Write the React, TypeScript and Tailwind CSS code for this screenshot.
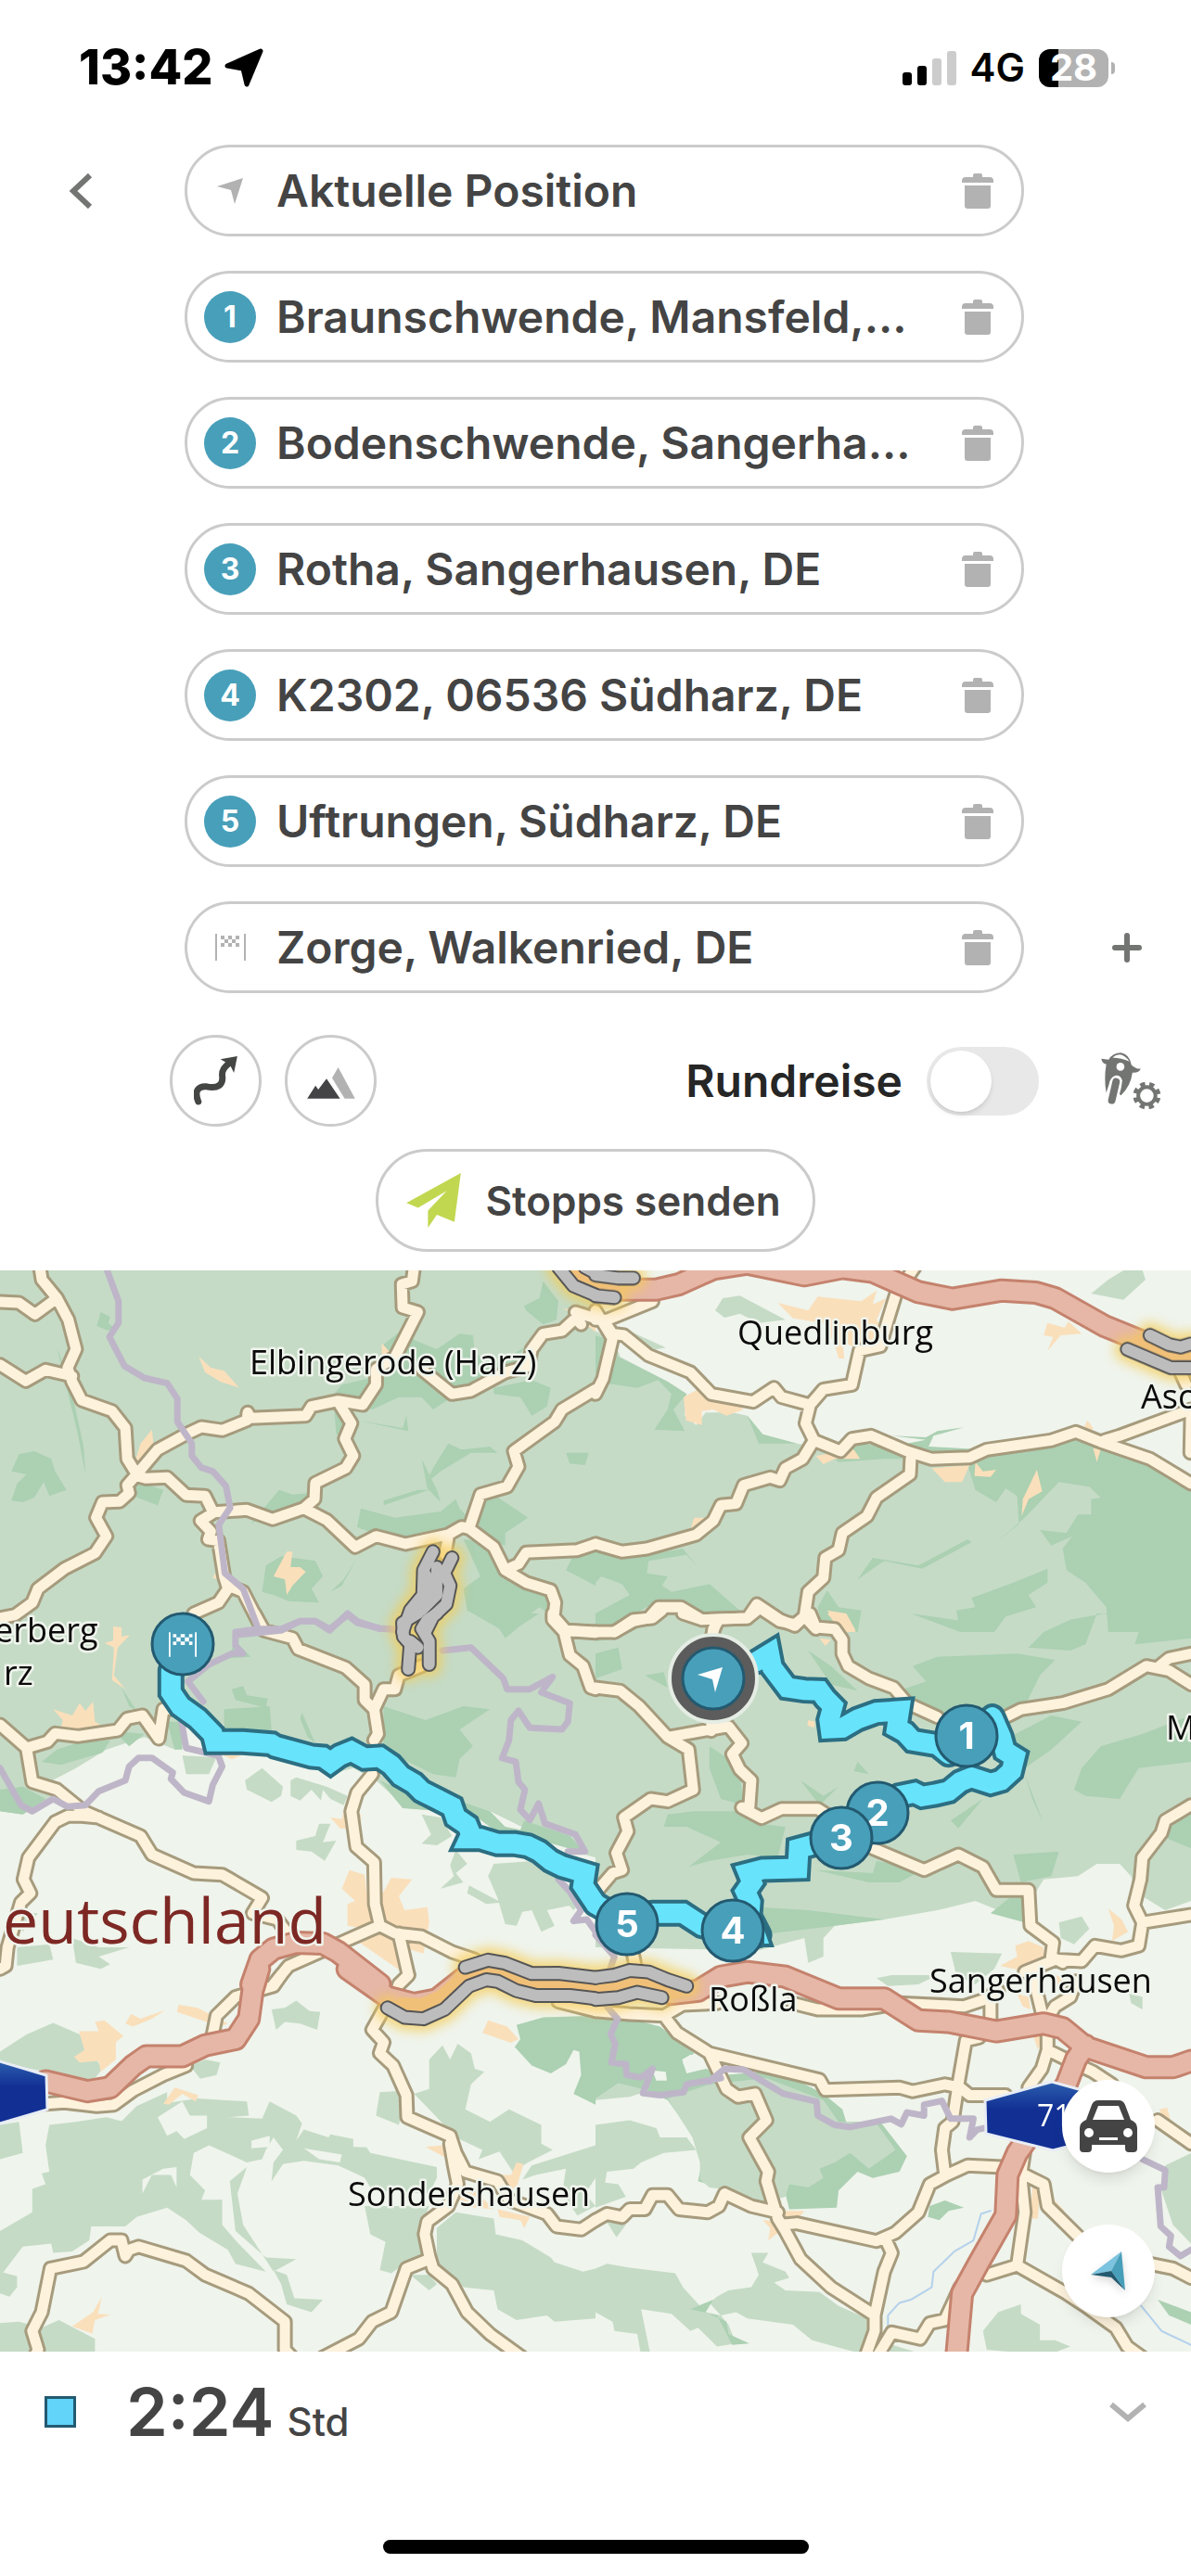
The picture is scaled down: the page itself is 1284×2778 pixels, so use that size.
import {ReactNode, useState} from 'react';

type Stop = {
  label: string;
  marker: 'position' | 'finish' | number;
};

const stops: Stop[] = [
  {label: 'Aktuelle Position', marker: 'position'},
  {label: 'Braunschwende, Mansfeld,...', marker: 1},
  {label: 'Bodenschwende, Sangerha...', marker: 2},
  {label: 'Rotha, Sangerhausen, DE', marker: 3},
  {label: 'K2302, 06536 Südharz, DE', marker: 4},
  {label: 'Uftrungen, Südharz, DE', marker: 5},
  {label: 'Zorge, Walkenried, DE', marker: 'finish'},
];

// The map is cut into six tiles, each with its own local coordinates.
type Tile = {
  transform: string;
  light: string;
  dark: string;
  clearing?: string;
  lightTop?: string;
  urban: string;
  border: string;
  road: string;
  motorway?: string;
  warning?: string;
  jam?: string;
  route?: string;
  water?: string;
};

const tiles: Tile[] = [
  {
    transform: 'translate(0 1360) scale(0.4095 0.3333)',
    light: 'M0 0H1568V1200H0z',
    dark: 'M50 625L90 615 135 640 145 680 175 740 130 760 115 715 90 765 60 780 30 775 45 720 70 690 30 680z M265 165L290 180 285 200 300 215 285 225 255 210z M1430 65L1470 130 1465 190 1430 205 1385 160 1380 145 1420 120z M1050 230L1100 260 1150 285 1210 235 1245 240 1250 300 1310 330 1380 280 1340 360 1250 420 1190 440 1140 480 1110 440 1050 440 980 480 880 430 900 400 970 380 1000 330 1010 270z M1300 410L1400 385 1450 410 1440 470 1400 500 1370 440 1300 430z M880 480L920 480 900 560 885 560z M1180 590L1215 610 1290 600 1310 620 1240 620 1160 680 1120 720 1140 670z M735 740L770 755 820 750 800 800 740 820 690 830 660 850z M950 800L1040 830 1160 810 1200 770 1210 800 1240 840 1170 880 1090 900 980 880 940 860z M1300 755L1390 830 1330 880 1330 920 1240 880 1250 800z M1220 900L1290 910 1320 1000 1380 1050 1450 1080 1460 1150 1420 1120 1330 1200 1230 1130 1220 1060 1265 1020z M1490 620L1550 620 1540 660 1500 655z M1510 950L1568 940 1568 1050 1490 1000z M700 985L740 955 830 970 850 1020 820 1060 840 1105 760 1100 720 1080 690 1070z M330 700L430 740 415 790 350 760z M940 515L1060 540 1070 500 1075 550z M1110 640L1150 740 1160 780 1125 735z M1010 790L1130 740 1100 740 1010 775z M940 960L900 1050 870 1070 905 1030z M150 280L185 400 220 600 225 690 205 560z',
    urban: 'M523 308L555 345 590 355 630 410 580 390 540 360z M1005 265L1030 300 1020 330 1005 310z M400 545L405 600 380 640 355 650 370 590z M755 940L770 940 765 990 790 990 805 1005 770 1050 755 1080 750 1030 720 1020z M1480 150L1568 190 1568 230 1530 190z M565 1010L575 1030 560 1025z',
    border: 'M282 30L312 130 312 200 288 245 328 340 380 378 440 395 467 445 467 520 505 590 505 630 530 668 560 680 595 728 606 798 576 853 592 1010 640 1060 680 1190 M620 1200L680 1190 740 1190 790 1165 830 1165 868 1195 915 1140 940 1165 1000 1190 1045 1192',
    road: 'M105 20L110 60 150 120 180 190 200 285 178 345 190 390 215 450 295 485 330 540 335 640 360 690 335 725 340 750 315 778 270 780 253 830 280 890 250 945 170 995 100 1060 85 1105 40 1145 0 1155 M0 132L50 135 92 172 150 120 M0 335L68 388 120 352 190 372 M360 690L415 610 490 560 530 537 585 547 650 515 652 490 660 508 805 500 820 470 890 452 955 465 990 400 990 350 1040 310 1100 165 1060 150 1058 75 1085 65 1090 20 M890 455L925 525 908 575 930 630 910 670 830 718 828 770 800 800 M360 695L385 703 440 700 490 757 540 760 560 810 M528 840L565 812 650 805 718 835 800 800 860 838 935 925 990 890 1068 915 1180 885 1215 860 1235 865 1300 925 1330 1000 1385 1040 1450 1065 1462 1105 1458 1150 1490 1195 1568 1200 M1235 865L1265 755 1335 730 1365 665 1353 615 1460 520 1480 480 1568 415 M1110 350L1190 430 1240 420 1330 360 1390 340 1400 285 1430 235 1480 225 1515 185 1530 205 M1515 165L1568 185 M1330 1000L1365 980 1385 943 1520 935 1568 915 M528 840L555 875 548 900 575 905 590 1020 600 1060 575 1105 510 1140 M600 1050L640 1070 690 1190 M1180 890L1172 950',
    warning: 'M1515 20L1545 60 1568 75',
    jam: 'M1470 20L1510 80 1568 110 M1540 20L1568 38 M1140 940L1115 1000 1113 1080 1080 1130 1060 1200 M1190 960L1170 1010 1185 1050 1175 1110 1140 1150 1120 1200 M1118 1010L1138 1050 1130 1100 M1150 990L1150 1080 1110 1130',
  },
  {
    transform: 'translate(642 1360) scale(0.4095 0.3333)',
    light: 'M0 225L50 260 65 310 190 390 240 430 235 500 265 530 290 490 360 490 400 500 440 560 530 590 580 600 700 590 870 605 1020 610 1260 560 1340 600 1440 650 1568 740V1200H0z M335 120L380 112 500 190 430 200 380 170 340 183 315 160z M1390 30L1440 30 1448 60 1390 125 1305 105 1350 60z M60 210L185 280 140 290z M0 30H85L0 90z',
    dark: 'M0 240L50 260 60 310 190 390 240 430 205 480 235 550 155 545 190 480 200 430 165 385 110 410 0 390z M700 590L840 610 880 600 1020 610 1260 560 1460 650 1568 740V1200H1350L1345 1120 1290 1040 1240 1000 1230 930 1255 890 1200 920 1170 870 1240 880 1270 820 1305 820 1305 770 1330 765 1300 730 1220 715 1130 830 1055 910 1115 850 1110 760 1080 735 1055 780 1000 740 980 660 830 640 760 640 640 650 590 600z M990 1090L1100 1040 1190 995 1190 1040 1140 1080 1160 1120 1080 1150 1050 1200 960 1200 950 1130 1000 1120z M0 920L60 955 140 950 230 930 270 990 240 950 140 970 135 1010 190 1020 175 1050 200 1070 300 1045 380 1130 300 1150 200 1110 150 1110 60 1170 0 1190 0 1140 90 1080 70 1045 15 1020 0 1040z M690 1030L730 960 850 985 980 900 990 910 860 995 760 970z M585 1120L610 1065 640 1120 700 1130 690 1200 600 1200z M780 565L870 570 900 550 970 538 890 565 875 605 780 600 870 578z M400 500L440 560 530 590 430 590z',
    urban: 'M480 135L560 160 585 115 700 130 740 95 730 140 765 120 740 190 755 220 700 290 650 260 655 315 640 315 630 270 600 200 520 185z M1190 200L1235 215 1245 195 1280 235 1225 240 1190 290 1205 245 1180 240z M232 440L300 395 390 480 345 500 310 480 280 485 280 530 238 515z M580 630L680 610 697 640 630 640 600 657z M885 670L985 660 965 715 920 715z M1000 650L1020 680 1055 675 1040 698 998 695z M1162 675L1176 745 1140 770 1122 825 1125 770z M1310 605L1330 610 1320 650z M260 830L290 830 250 865z M610 1130L660 1140 685 1200 650 1200z M1295 515L1310 540 1300 560 1285 540z',
    border: '',
    road: 'M0 430L20 380 45 250 0 160 M0 190L30 190 150 130 M20 190L45 235 75 240 140 305 250 360 305 430 415 455 470 410 490 440 565 465 600 415 675 400 695 290 750 275 770 190 790 110 840 20 M565 465L553 525 575 580 645 615 675 575 725 565 820 615 885 640 985 635 1030 610 1200 580 1265 553 1330 585 1460 640 1568 720 M1340 580L1380 565 1568 480 M1568 500L1566 620 M1540 360L1555 400 M575 580L545 640 500 670 485 710 460 700 390 725 370 785 330 790 310 840 265 885 135 930 70 940 0 915 M830 640L828 690 740 765 715 825 650 880 640 935 605 960 600 1025 560 1070 550 1150 525 1180 485 1160 425 1110 400 1155 280 1160 225 1120 165 1120 140 1155 100 1165 50 1200 M550 1150L580 1190 M320 1160L310 1200',
    motorway: 'M60 92L160 92 220 75 310 25 400 8 550 46 650 22 730 35 850 100 940 122 1070 95 1160 102 1210 120 1340 210 1430 255 1500 300',
    warning: 'M0 82L50 90 M1430 262L1520 310 1568 310',
    jam: 'M0 45L60 55 100 55 M0 112L50 118 M1460 240L1510 270 1540 278 1568 268 M1400 285L1515 345 1568 345',
  },
  {
    transform: 'translate(0 1740) scale(0.4095 0.3333)',
    light: 'M0 0H1568V790L1540 780 1440 730 1390 700 1290 640 1220 610 1160 640 1070 630 990 540 930 500 870 520 720 460 590 455 590 360 480 330 460 440 380 400 280 440 200 500 130 545 140 590 60 650 0 640z M690 500L745 560 740 590 715 610 650 570 645 540z M765 540L780 530 860 560 915 590 905 620 870 600 850 570 845 605 820 570 790 605 765 590z M480 460L570 465 550 520 490 520z M840 680L870 680 850 740 885 735 855 800 820 770 780 765 780 735 830 720z M1110 650L1160 660 1190 720 1150 750 1110 745 1135 715z M1300 810L1410 800 1500 880 1520 940 1440 960 1460 1010 1425 1030 1400 960 1375 965 1360 1010 1330 1005 1310 920 1285 850z M1235 880L1320 935 1280 940 1230 905z M1200 765L1230 810 1200 840 1220 870 1160 890 1195 850 1185 815z M45 965L100 970 60 1030z M45 1080L130 1070 140 1120 45 1140z M190 1050L260 1080 340 1080 260 1110 290 1135 265 1150 200 1130z M1480 920L1530 930 1510 960z',
    dark: 'M590 310L710 300 715 380 590 375z M610 245L640 235 650 265 705 275 700 305 620 280z M1010 300L1120 345 1220 300 1290 310 1210 375 1245 430 1210 470 1200 530 1140 520 1010 440z M1000 540L1090 590 1170 640 1060 630z M1180 590L1220 610 1290 640 1330 690 1370 700 1380 670 1500 720 1540 775 1440 740 1300 700z M0 570L60 560 120 600 60 650 0 640z M200 420L290 410 270 450 160 490 110 480 150 440z M300 380L380 390 340 430z M1290 0L1420 0 1370 40 1330 80z M440 350L480 350 480 440 460 440z M795 320L830 420 810 400 790 340z M320 240L360 315 340 300z M620 90L660 140 600 145z',
    urban: 'M298 42L320 45 320 75 342 70 310 110 300 200 330 245 295 215 300 110 275 95 298 88z M140 310L190 330 210 290 225 315 245 285 250 350 265 360 200 380 160 370 165 345z M520 390L545 390 540 420z M580 455L635 460 610 472z M870 660L900 665 905 640 950 650 950 700 895 695z M920 830L960 845 965 900 985 920 1010 900 1030 855 1085 860 1050 915 1065 960 1125 950 1130 1000 1115 1100 1060 1080 1060 1160 1000 1110 930 1050 960 1020 915 1010 915 940 935 930 900 890z',
    border: 'M0 500L55 620 85 640 140 600 178 625 225 620 260 575 330 540 340 495 365 467 400 467 455 515 450 535 485 580 550 608 560 555 585 495 575 460 490 435 475 330 M535 285L495 220 550 165 610 130 640 130 620 105 620 70 740 55 790 25 830 25 868 50 915 5 940 30 1000 48 1045 52 M1165 120L1240 110 1325 210 1335 245 1395 245 1455 205 1425 255 1500 290 1495 350 1480 375 1395 370 1365 315 1345 345 1340 410 1322 468 1358 480 1365 545 1382 570 1370 635 1395 668 1418 615 1435 680 1515 715 1540 770 1495 770 M1470 860L1500 900 1530 960 1510 995 1545 990 1568 1030',
    road: 'M0 360L70 435 125 415 145 388 205 397 310 378 335 340 375 330 418 405 430 310 460 310 M70 435L85 545 150 570 220 640 370 720 400 780 510 840 585 845 690 920 665 970 730 990 760 1040 M260 660L215 655 178 655 145 675 75 790 62 860 80 905 55 935 20 1080 15 1140 0 1150 M670 0L695 55 770 80 785 115 910 175 960 230 960 280 985 310 995 390 985 410 M985 310L1010 245 1040 245 1050 200 1110 170 M980 520L940 580 925 640 938 755 985 805 987 940 1000 1010 880 1075 760 1140 720 1200 M1000 1010L1040 1035 1110 1045 1190 1095 1250 1120 M1050 1035L1075 1170 1050 1200 M1455 0L1455 20 1485 60 1500 135 1535 170 1555 240 1568 245 M1485 55L1568 62',
    motorway: 'M662 1200L685 1120 720 1085 780 1065 850 1068 890 1095 1000 1200',
    jam: 'M1100 0L1060 30 1062 75 1080 100 1075 180 M1150 0L1125 20 1110 50 1130 90 1130 165 M1080 90L1100 110',
    route: 'M450 185L450 255 475 300 520 340 560 390 565 415 640 415 715 422 725 430 820 462 850 465 870 482 895 460 925 445 960 468 1000 465 1030 490 1055 525 1090 550 1110 575 1150 600 1190 625 1200 660 1230 685 1240 715 1235 728 1265 728 1310 745 1355 745 1390 752 1420 770 1450 800 1480 818 1540 840 1535 880 1568 940',
  },
  {
    transform: 'translate(642 1740) scale(0.4095 0.3333)',
    light: 'M0 0H1568V930L1500 960 1420 900 1410 850 1380 810 1320 810 1270 850 1180 860 1160 900 1140 1000 1000 930 900 960 760 990 630 1010 600 1050 600 1110 560 1130 550 1050 430 1090 0 1080z M935 1095L1070 1100 1050 1150 1000 1200 950 1170z M1220 1000L1280 980 1300 1020 1260 1070 1225 1050z',
    dark: 'M0 0L180 0 140 30 60 80 0 90z M835 170L900 140 1110 130 1210 150 1170 200 1130 300 1060 310 940 325 870 310 800 250 870 220z M1140 110L1180 60 1250 20 1340 0 1430 60 1420 100 1568 80V0H1320L1290 100 1250 120z M1280 500L1330 430 1440 390 1568 330V480L1430 500 1380 600 1290 590 1260 570z M1090 400L1200 330 1280 350 1200 440 1130 500z M300 430L350 470 380 520 390 620 330 600 300 500z M260 640L370 640 430 680 500 690 480 790 400 780 300 800 245 820 330 740 240 690 180 690 190 650z M580 830L730 840 740 800 860 830 800 870 720 870z M430 950L560 960 760 990 630 1010 430 1040z M1090 920L1140 920 1130 1000 1040 970z M1520 640L1568 620V760L1490 720z M1100 780L1220 770 1200 850 1120 870z M935 670L1020 600 955 695z M130 200L180 190 190 240z M560 120L620 170 690 250 620 230z M1130 520L1180 680 1150 600z M540 540L600 590 640 560 590 620z M830 0L1000 30 960 60z M0 130L60 110 70 180 0 210z M690 480L720 520 680 510z',
    urban: 'M610 0L660 0 685 55 650 60z M590 80L620 85 605 105z M560 345L578 350 575 370 558 362z M1105 1075L1140 1060 1180 1080 1180 1110 1120 1155 1065 1140 1110 1110z M1350 955L1385 990 1402 1030 1360 1060 1365 1010z',
    border: 'M0 1040L50 1110 30 1180',
    road: 'M0 60L50 60 100 20 150 15 175 -10 M230 0L280 20 400 15 425 -10 M430 -20L485 25 525 35 550 10 M565 0L580 45 630 50 650 85 650 130 665 170 720 210 785 240 820 290 900 335 M1080 335L1120 310 1230 290 1350 245 1450 170 1510 185 1568 230 M1480 175L1510 145 1568 130 M320 30L310 50 305 90 305 380 M0 240L65 250 115 300 190 400 350 365 385 420 360 455 380 505 410 540 405 625 385 628 437 662 490 632 585 632 620 660 M190 400L245 440 257 570 190 608 145 600 75 660 85 705 55 775 70 830 45 840 10 890 M730 760L865 830 955 780 1020 820 1055 895 1140 895 1145 1010 1205 1065 1200 1110 1230 1130 M1568 620L1500 670 1490 710 1440 790 1435 860 1418 945 1440 1000 1430 1075 1385 1090 1315 1075 1280 1125 1210 1120 1130 1160 M1440 1000L1568 975 M95 1080L105 1140',
    route: 'M425 155L458 130 465 175 505 240 550 248 590 250 605 275 625 300 615 345 618 372 650 370 690 342 740 320 800 315 793 370 815 385 835 412 900 425 930 455 M1045 335L1068 400 1078 445 1104 465 1095 510 1068 540 1040 550 990 530 960 545 930 575 895 585 860 592 840 580 800 590 745 640 M580 745L535 760 532 825 440 828 402 840 412 870 395 900 408 935 405 980 430 1040 M150 970L230 970 280 1010 340 1030 M0 940L70 990',
  },
  {
    transform: 'translate(0 2130) scale(0.4095 0.3366)',
    light: 'M0 245L70 190 140 153 210 190 270 300 240 345 120 310 0 280z M715 110L750 105 780 82 815 115 843 118 835 175 790 155 750 150 727 175z M500 290L540 270 580 280 570 320 527 332z M130 480L200 470 280 455 320 468 360 420 440 375 440 410 520 395 650 405 655 450 600 455 690 460 710 405 780 450 795 475 780 530 800 495 865 520 870 510 930 525 930 550 965 552 975 570 1150 615 1150 650 1130 700 980 690 960 650 945 640 890 610 800 595 745 605 715 660 720 600 745 560 720 520 700 560 690 590 650 600 550 545 510 570 500 640 540 690 530 720 585 720 585 800 620 850 700 950 620 925 600 880 525 825 490 785 440 745 360 775 330 805 240 805 235 850 190 885 140 890 135 860 60 870 10 950 0 960V820L85 760 85 685 120 670 110 635 130 630 120 545z M605 660L650 615 625 700 640 800 720 950 780 910 700 905 620 820z M720 945L755 960 775 1035 850 1040 820 1080 755 1055 740 990z M0 950L45 965 45 1000 25 1030 0 1020z M0 1115L50 1110 110 1130 155 1105 250 1165V1218H0z M0 480L50 470 60 570 0 590z M1130 270L1165 225 1185 270 1205 220 1240 250 1250 300 1275 310 1240 350 1225 430 1290 470 1340 430 1425 480 1425 540 1455 560 1390 600 1350 630 1315 565 1260 590 1270 560 1200 520 1130 430 1090 380 1130 365z M990 450L1000 375 1070 370 1050 480z M1375 655L1400 610 1568 545V650L1540 700 1568 740 1520 770 1480 700 1490 620 1410 640z M1150 810L1200 760 1300 780 1305 830 1375 850 1450 905 1460 920 1535 950 1568 940V1100L1460 1110 1440 1090 1360 1105 1310 1070 1300 1010 1220 1000 1150 930z M960 740L1130 740 1110 800 1130 900 1060 930 1030 955 1000 945 1015 855 975 830z M1080 960L1130 960 1150 990 1130 1010z',
    dark: 'M1360 160L1430 135 1568 130V415L1510 380 1530 320 1525 245 1510 240 1490 285 1450 315 1400 290 1355 230 1370 205z',
    clearing: 'M415 455L480 405 500 450 545 450 545 490 485 525 465 500 440 515z M662 530L710 515 710 550 662 555z M800 555L900 575 895 600 840 590z M375 655L430 620 465 615 465 680 450 640 400 640 375 700z',
    urban: 'M208 180L260 180 250 150 275 145 325 195 305 215 305 270 265 310 260 275 210 280 195 262 222 240z M470 95L520 105 600 155 580 165 466 118z M330 155L345 125 370 140 435 112 400 140 350 165z M430 412L460 360 522 385 515 405 480 380 445 415z M1285 145L1335 165 1365 205 1345 217 1270 185z M1120 550L1165 545 1250 620 1180 590z M1310 640L1345 640 1360 600 1378 605 1360 680 1320 690z M1310 750L1395 775 1380 810 1370 785 1315 775z M190 1125L245 1080 268 1030 258 1085 290 1088 250 1105 243 1148z M1200 690L1250 690 1300 750 1210 740z',
    border: '',
    road: 'M740 0L720 35 620 70 570 130 560 190 M490 290L430 320 350 370 300 415 255 420 170 408 120 412 M1075 0L1050 30 1040 60 M1010 110L980 175 1010 215 1000 250 1035 290 1070 385 1072 455 1185 515 1200 570 1225 630 1310 660 1340 720 1440 765 1465 805 1530 815 1568 785 M1185 540L1195 610 1205 670 1180 740 1125 790 1118 830 1130 900 1140 940 1190 990 1230 1080 1290 1150 1375 1225 M1130 910L1070 940 1030 1080 980 1110 945 1165 850 1225 M90 1225L100 1200 85 1140 110 1080 133 940 220 918 290 850 320 850 330 900 340 880 365 870 490 915 540 960 655 1020 750 1110 750 1200 770 1225 M1470 85L1568 115',
    motorway: 'M682 -20L665 50 655 140 620 205 540 225 480 260 385 260 350 290 290 360 230 372 120 340 M915 -20L1020 70 1090 92 1150 78 1220 10',
    warning: 'M1060 92L1110 95 1160 70 1220 5 1290 -8 1360 12 1410 32 1500 30 1568 38',
    jam: 'M1020 105L1065 135 1115 140 1170 110 1235 35 1280 15 1310 20 1360 50 1410 65 1500 65 1568 75 M1225 -25L1285 -48 1330 -38 1400 -5 1470 -6 1568 8',
  },
  {
    transform: 'translate(642 2130) scale(0.4095 0.3366)',
    light: 'M0 480L90 465 160 490 170 520 240 520 265 560 180 570 120 600 100 620 30 630 25 665 60 670 80 710 0 745z M410 890L455 890 440 920 500 950 510 970 470 985 500 1010 590 1015 640 1060 715 1100 715 1218 570 1170 520 1120 400 1100 370 1080 330 1090 300 1050 320 1030 350 1010 410 1000 430 960z M0 940L30 925 90 937 210 955 230 1000 260 1040 290 1080 330 1090 350 1120 370 1180 320 1190 270 1130 250 1140 200 1085 120 1070 130 1130 145 1218 120 1218 110 1150 50 1140 45 1110 0 1080z M1020 1140L1060 1080 1120 1055 1120 1085 1170 1120 1170 1170 1210 1170 1250 1190 1190 1218 1030 1200z M1568 570V860L1520 800 1490 690 1500 610z M740 10L780 0 900 0 850 30 770 35z M1405 60L1440 70 1440 110 1410 90z M30 790L80 800 55 840z M770 1180L870 1218 780 1218z',
    dark: 'M0 110L60 130 170 165 260 250 230 280 240 310 290 300 340 320 440 310 520 330 600 380 650 430 660 470 750 470 820 580 800 630 730 650 690 630 640 690 635 745 510 750 500 700 400 700 350 690 270 660 280 600 260 520 190 400 130 370 70 360 0 400z M880 740L920 722 970 745 930 755 905 785 875 775z M1480 1040L1568 1080V1120L1510 1090z M250 1070L310 1040 290 1080 345 1110 350 1150 405 1180 360 1185 320 1090z',
    clearing: 'M228 270L250 255 290 270 290 300 240 315z M150 305L185 310 188 338 160 338z',
    lightTop: 'M190 395L300 350 450 330 600 400 640 470 740 475 790 560 720 620 690 590 670 570 630 600 590 620 600 650 560 680 510 670 500 710 440 730 360 690 300 680 275 655 275 600 255 520z M0 395L60 345 140 370 90 390 0 400z',
    urban: 'M500 755L550 755 520 800 475 830 455 850 460 810 440 785 490 790z M1110 60L1140 70 1145 110 1125 100z M1150 185L1180 190 1165 240z M1150 680L1170 680 1165 780 1145 780z M1485 430L1505 425 1515 470 1490 460z M1210 0L1235 10 1210 60z M1200 710L1235 755 1215 755z',
    border: 'M30 100L58 140 40 190 52 220 42 280 80 285 82 320 120 328 150 300 125 378 170 385 232 375 240 350 330 330 M300 340L340 300 390 303 440 340 495 380 582 405 585 450 630 480 670 487 778 460 805 478 820 440 865 450 865 415 912 403 935 460 995 460 985 520 1005 495 1025 490 M1440 590L1500 625 1497 680 1480 680 1488 805 1515 835 1510 870 1540 900 1568 880',
    road: 'M0 115L90 125 180 130 230 95 320 90 M520 90L585 110 700 110 800 90 970 100 1020 80 1060 50 M180 130L215 185 300 250 345 365 375 390 420 380 450 465 405 520 455 630 450 660 480 780 500 820 540 910 620 1000 735 1090 M300 250L590 335 605 368 800 360 835 372 920 350 960 360 985 385 1080 385 M1040 80L1040 140 M1155 20L1175 120 M1265 20L1250 70 1210 100 1195 130 M1010 200L975 210 955 350 940 470 920 490 912 560 920 640 M1190 180L1190 240 1175 300 1140 360 M1190 240L1240 270 1310 310 1360 350 M1480 465L1568 540 M0 785L30 765 70 775 90 750 130 750 150 705 190 705 220 750 295 760 325 740 340 700 410 740 480 760 M490 800L530 795 740 852 790 825 850 760 880 670 925 640 980 610 1070 615 M765 850L780 890 760 950 735 1090 735 1140 710 1225 M740 1225L780 1145 855 1165 880 1115 920 1105 960 1000 M1130 560L1120 640 1130 760 1110 930 1240 1020 1290 1060 1370 1130 1400 1190 1440 1225 M1110 930L1030 960 M1130 640L1180 670 1190 740 1290 860 M1460 925L1520 940 1568 970',
    motorway: 'M200 60L270 50 330 5 400 -10 500 5 640 75 760 75 850 145 930 150 1055 180 1180 155 1230 170 1290 230 1450 295 1520 295 1568 275 M1290 225L1265 270 1240 350 1110 570 1085 640 1080 770 1010 920 965 1020 950 1225',
    warning: 'M0 45L60 40 110 20 160 25 210 55',
    jam: 'M0 8L50 0 90 -15 140 -10 190 15 240 35 M0 78L60 72 110 55 175 72',
    water: 'M1040 755L1015 765 995 850 945 885 890 950 885 1000 830 1040 800 1050 770 1090 770 1130 M1437 1060L1490 1140 1568 1185',
  },
];

const places = [
  {name: 'Elbingerode (Harz)', x: 269, y: 1482},
  {name: 'Quedlinburg', x: 795, y: 1450},
  {name: 'Asc', x: 1230, y: 1519},
  {name: 'erberg', x: -6, y: 1771},
  {name: 'rz', x: 4, y: 1817},
  {name: 'M', x: 1257, y: 1876},
  {name: 'Sangerhausen', x: 1002, y: 2149},
  {name: 'Roßla', x: 764, y: 2169},
  {name: 'Sondershausen', x: 375, y: 2379},
];

const mapMarkers = [
  {label: '1', x: 1042, y: 1872},
  {label: '2', x: 946, y: 1955},
  {label: '3', x: 907, y: 1982},
  {label: '4', x: 790, y: 2082},
  {label: '5', x: 676, y: 2075},
];

function PositionIcon({className}: {className?: string}) {
  return (
    <svg viewBox="0 0 28 28" className={className} fill="currentColor">
      <path d="M28 0L19 28 15 13 0 9z" />
    </svg>
  );
}

function FinishIcon({className}: {className?: string}) {
  return (
    <svg viewBox="0 0 33 29" className={className} fill="currentColor">
      <path d="M0 0h2v29H0zM31 0h2v29h-2z" />
      <path d="M6 2h4v4H6zM14 2h4v4h-4zM22 2h4v4h-4zM10 6h4v4h-4zM18 6h4v4h-4zM6 10h4v4H6zM14 10h4v4h-4zM22 10h4v4h-4z" />
    </svg>
  );
}

function TrashIcon() {
  return (
    <svg viewBox="0 0 34 38" className="h-[38px] w-[34px]" fill="#b2b2b2">
      <path d="M12 4V2a2 2 0 0 1 2-2h6a2 2 0 0 1 2 2v2h8a4 4 0 0 1 4 4v2H0V8a4 4 0 0 1 4-4z" />
      <path d="M3 13h28v22a3 3 0 0 1-3 3H6a3 3 0 0 1-3-3z" />
    </svg>
  );
}

function BikeSettingsIcon() {
  return (
    <svg viewBox="53 72 196 192" className="h-[64px] w-[65px]" fill="#737573">
      <path d="M54 95L78 98Q90 75 118 75Q146 80 152 115Q168 130 182 127Q176 142 155 140Q150 182 118 214L113 210Q120 190 122 166Q118 148 101 149Q82 155 79 178L70 206Q62 160 70 113Q56 110 54 95z" />
      <path d="M90 91Q120 66 145 104Q120 92 90 91z" fill="#fff" />
      <circle cx="116" cy="121" r="13" fill="#fff" />
      <path d="M102 170L88 230" stroke="#737573" strokeWidth="24" strokeLinecap="round" />
      <circle cx="202" cy="215" r="28" fill="none" stroke="#737573" strokeWidth="12" />
      <circle
        cx="202"
        cy="215"
        r="38"
        fill="none"
        stroke="#737573"
        strokeWidth="14"
        strokeDasharray="16 13.85"
        strokeDashoffset="-7"
      />
    </svg>
  );
}

function StatusBar() {
  return (
    <div className="flex h-[146px] items-center justify-between pr-[82px] pl-[85px] text-black">
      <div className="flex items-center gap-[13px]">
        <span className="text-[52px] leading-none font-extrabold">13:42</span>
        <svg viewBox="0 0 42 42" className="h-[42px] w-[42px]">
          <path
            d="M39 3L24 39 20 22 3 19z"
            stroke="#000"
            strokeWidth="5"
            strokeLinejoin="round"
          />
        </svg>
      </div>
      <div className="flex items-center">
        <div className="flex items-end gap-[6px]">
          <div className="h-[14px] w-[10px] rounded-[3px] bg-black" />
          <div className="h-[21px] w-[10px] rounded-[3px] bg-black" />
          <div className="h-[29px] w-[10px] rounded-[3px] bg-[#cccccc]" />
          <div className="h-[37px] w-[10px] rounded-[3px] bg-[#cccccc]" />
        </div>
        <span className="ml-[15px] text-[42px] leading-none font-semibold">4G</span>
        <div className="ml-[15px] flex h-[41px] w-[75px] items-center justify-center rounded-[12px] bg-[linear-gradient(to_right,#000_28%,#b2b2b2_28%)]">
          <span className="text-[40px] leading-none font-bold text-white">28</span>
        </div>
        <div className="ml-[3px] h-[13px] w-[4px] rounded-r-full bg-[#b2b2b2]" />
      </div>
    </div>
  );
}

function StopMarker({marker}: {marker: Stop['marker']}) {
  if (typeof marker === 'number') {
    return (
      <span className="flex size-[56px] shrink-0 items-center justify-center rounded-full bg-[#489fba] text-[32px] leading-none font-bold text-white">
        {marker}
      </span>
    );
  }
  return (
    <span className="flex size-[56px] shrink-0 items-center justify-center text-[#b2b2b2]">
      {marker === 'position' ? (
        <PositionIcon className="size-[28px]" />
      ) : (
        <FinishIcon className="h-[29px] w-[33px]" />
      )}
    </span>
  );
}

function StopField({stop}: {stop: Stop}) {
  return (
    <li className="flex h-[99px] items-center rounded-full border-[3px] border-[#cbcbcb] pr-[30px] pl-[18px]">
      <StopMarker marker={stop.marker} />
      <input
        type="text"
        aria-label="Stopp"
        defaultValue={stop.label}
        className="ml-[22px] h-[60px] min-w-0 flex-1 bg-transparent text-[48px] font-semibold text-[#444444] outline-none"
      />
      <button type="button" aria-label="Stopp entfernen" className="ml-[12px]">
        <TrashIcon />
      </button>
    </li>
  );
}

function RoundButton({label, children}: {label: string; children: ReactNode}) {
  return (
    <button
      type="button"
      aria-label={label}
      className="flex size-[99px] items-center justify-center rounded-full border-[3px] border-[#cbcbcb]"
    >
      {children}
    </button>
  );
}

function RouteOptions() {
  const [roundTrip, setRoundTrip] = useState(false);

  return (
    <div className="mt-[45px] flex items-center pr-[32px] pl-[183px]">
      <div className="flex gap-[25px]">
        <RoundButton label="Kurvige Strecke">
          <svg viewBox="89 90 141 160" className="h-[53px] w-[47px]">
            <path
              d="M103 238C88 200 105 187 130 189C165 196 185 185 181 155C179 135 188 125 205 112"
              fill="none"
              stroke="#444644"
              strokeWidth="21"
              strokeLinecap="round"
            />
            <path d="M230 90L219 144 207 120 193 110 175 100z" fill="#444644" />
          </svg>
        </RoundButton>
        <RoundButton label="Bergige Strecke">
          <svg viewBox="452 109 156 115" className="h-[38px] w-[52px]">
            <path d="M452 223L479 181 488 194 515 158 559 223z" fill="#444346" />
            <path d="M533 156L553 121 608 223H574z" fill="#b2b2b2" />
          </svg>
        </RoundButton>
      </div>
      <label className="ml-auto flex cursor-pointer items-center gap-[26px]">
        <span className="text-[48px] leading-none font-semibold text-[#262626]">Rundreise</span>
        <input
          type="checkbox"
          checked={roundTrip}
          onChange={(event) => setRoundTrip(event.target.checked)}
          className="peer sr-only"
        />
        <span className="flex h-[74px] w-[121px] items-center rounded-full bg-[#e8e8e8] px-[4px] peer-checked:justify-end peer-checked:bg-[#489fba]">
          <span className="size-[66px] rounded-full bg-white shadow-md" />
        </span>
      </label>
      <button type="button" aria-label="Fahrzeugeinstellungen" className="ml-[67px]">
        <BikeSettingsIcon />
      </button>
    </div>
  );
}

function MapLayer({
  layer,
  fill = 'none',
  stroke,
  width,
  join = 'round',
}: {
  layer: Exclude<keyof Tile, 'transform'>;
  fill?: string;
  stroke?: string;
  width?: number;
  join?: 'round' | 'miter';
}) {
  return (
    <g fill={fill} stroke={stroke} strokeWidth={width} strokeLinecap="round" strokeLinejoin={join}>
      {tiles.map((tile) => (
        <path
          key={tile.transform}
          d={tile[layer] || undefined}
          transform={tile.transform}
          vectorEffect="non-scaling-stroke"
        />
      ))}
    </g>
  );
}

function RouteMap() {
  return (
    <svg
      viewBox="0 1370 1284 1166"
      preserveAspectRatio="xMidYMid slice"
      className="h-[1166px] w-full font-['Open_Sans','Noto_Sans',sans-serif]"
      role="img"
      aria-label="Karte der Route"
    >
      <defs>
        <filter id="glow" x="-20%" y="-20%" width="140%" height="140%">
          <feGaussianBlur stdDeviation="6" />
        </filter>
        <linearGradient id="shield" x1="0" y1="0" x2="0" y2="1">
          <stop offset="0" stopColor="#2b5fae" />
          <stop offset="0.4" stopColor="#123094" />
        </linearGradient>
      </defs>
      <rect y="1370" width="1284" height="1166" fill="#eff4ec" />
      <MapLayer layer="light" fill="#c5dbc6" />
      <MapLayer layer="dark" fill="#abd0b2" />
      <MapLayer layer="lightTop" fill="#c5dbc6" />
      <MapLayer layer="clearing" fill="#eff4ec" />
      <MapLayer layer="urban" fill="#fadfbb" />
      <MapLayer layer="water" stroke="#b4d1ec" width={2} />
      <MapLayer layer="road" stroke="#a69b7d" width={17} />
      <MapLayer layer="road" stroke="#fdf2dc" width={11} />
      <MapLayer layer="motorway" stroke="#c4826d" width={26} />
      <MapLayer layer="motorway" stroke="#e6b7a6" width={20} />
      <MapLayer layer="border" stroke="#beb6c8" width={7} />
      <g filter="url(#glow)" opacity="0.7">
        <MapLayer layer="jam" stroke="#f5cb52" width={28} />
      </g>
      <MapLayer layer="warning" stroke="#f0c078" width={14} />
      <MapLayer layer="jam" stroke="#555555" width={16} />
      <MapLayer layer="jam" stroke="#bdbdbd" width={12} />

      <g strokeWidth="3" stroke="#e8edf5" fill="url(#shield)">
        <path d="M-50 2238L0 2223 50 2238 51 2275 0 2290 -50 2275z" />
        <path d="M1062 2265L1134 2245 1206 2265 1206 2301 1135 2319 1063 2301z" />
      </g>
      <text x="1118" y="2293" fontSize="32" fill="#fff">
        71
      </text>

      <g
        fontSize="36"
        fill="#0a0a0a"
        stroke="#eff4ec"
        strokeWidth="5"
        strokeLinejoin="round"
        paintOrder="stroke"
      >
        {places.map((place) => (
          <text key={place.name} x={place.x} y={place.y}>
            {place.name}
          </text>
        ))}
        <text x="3" y="2096" fontSize="68" fill="#7d2824" fontWeight="500">
          eutschland
        </text>
      </g>

      <MapLayer layer="route" stroke="#2c6e82" width={29} join="miter" />
      <MapLayer layer="route" stroke="#68e3fc" width={21} join="miter" />
      <path d="M822 2070L832 2098 822 2098z" fill="#68e3fc" stroke="#2c6e82" strokeWidth="4" />

      <g fill="#489fba" stroke="#235a70" strokeWidth="3">
        <circle cx="197" cy="1773" r="33" />
        <circle cx="769" cy="1810" r="47" fill="#5b5c5b" stroke="#e4ece4" strokeWidth="4" />
        <circle cx="769" cy="1810" r="33" />
      </g>
      <svg x="182" y="1760" width="30" height="27" viewBox="0 0 33 29" fill="#fff">
        <path d="M0 0h2v29H0zM31 0h2v29h-2z" />
        <path d="M5 2h4v4H5zM14 2h5v4h-5zM24 2h4v4h-4zM9 6h5v5H9zM19 6h5v5h-5zM5 11h4v4H5zM14 11h5v4h-5zM24 11h4v4h-4z" />
      </svg>
      <path d="M779 1798L771 1825 768 1811 752 1806z" fill="#fff" />
      {mapMarkers.map((marker) => (
        <g key={marker.label}>
          <circle
            cx={marker.x}
            cy={marker.y}
            r="33"
            fill="#489fba"
            stroke="#235a70"
            strokeWidth="3"
          />
          <text
            x={marker.x}
            y={marker.y + 14}
            textAnchor="middle"
            className="fill-white font-['Inter',sans-serif] text-[40px] font-bold"
          >
            {marker.label}
          </text>
        </g>
      ))}
    </svg>
  );
}

function MapButtons() {
  return (
    <div className="absolute right-[39px] bottom-[37px] flex flex-col gap-[56px]">
      <button
        type="button"
        aria-label="Fahrzeug"
        className="flex size-[100px] items-center justify-center rounded-full bg-white shadow-lg"
      >
        <svg viewBox="0 0 62 56" className="h-[56px] w-[62px]">
          <path
            d="M20 0h22q5 0 7 5l6 16q7 3 7 9v22q0 4-4 4h-5q-4 0-4-4v-4H13v4q0 4-4 4H4q-4 0-4-4V30q0-6 7-9l6-16q2-5 7-5z"
            fill="#444444"
          />
          <path d="M20 6h22l6 15H14z" fill="#fff" />
          <circle cx="10" cy="35" r="5" fill="#fff" />
          <circle cx="52" cy="35" r="5" fill="#fff" />
          <path d="M21 40h20v3H21z" fill="#fff" />
        </svg>
      </button>
      <button
        type="button"
        aria-label="Kompass"
        className="flex size-[100px] items-center justify-center rounded-full bg-white shadow-lg"
      >
        <svg viewBox="0 0 38 42" className="h-[42px] w-[38px] drop-shadow-lg">
          <path d="M33 0L22 21 0 25z" fill="#7cc3df" />
          <path d="M33 0L37 42 22 21z" fill="#489fba" />
          <path d="M0 25L22 21 37 42 22 28z" fill="#235a70" />
        </svg>
      </button>
    </div>
  );
}

function TripSummary() {
  return (
    <footer className="flex flex-col items-center">
      <div className="flex h-[130px] w-full items-center px-[48px]">
        <span className="size-[34px] border-[3px] border-[#235a70] bg-[#62d3f9]" />
        <p className="ml-[54px] flex items-baseline gap-[14px] leading-none text-[#444444]">
          <span className="text-[72px] font-semibold">2:24</span>
          <span className="text-[42px] font-medium">Std</span>
        </p>
        <button type="button" aria-label="Details anzeigen" className="ml-auto">
          <svg viewBox="0 0 40 22" className="h-[22px] w-[40px]">
            <path d="M2 3L20 18 38 3" fill="none" stroke="#b2b2b2" strokeWidth="6" />
          </svg>
        </button>
      </div>
      <div className="mt-[73px] mb-[24px] h-[15px] w-[459px] rounded-full bg-black" />
    </footer>
  );
}

export default function App() {
  return (
    <div className="bg-white font-['Inter','Liberation_Sans',sans-serif]">
      <StatusBar />

      <main>
        <section className="grid grid-cols-[199px_minmax(0,1fr)_180px] pt-[10px]">
          <button
            type="button"
            aria-label="Zurück"
            className="flex h-[99px] items-center pl-[74px]"
          >
            <svg viewBox="0 0 26 38" className="h-[38px] w-[26px]">
              <path d="M23 2L5 19 23 36" fill="none" stroke="#737573" strokeWidth="6" />
            </svg>
          </button>
          <ul className="flex flex-col gap-[37px]">
            {stops.map((stop) => (
              <StopField key={stop.label} stop={stop} />
            ))}
          </ul>
          <button
            type="button"
            aria-label="Stopp hinzufügen"
            className="flex h-[99px] items-center justify-end self-end pr-[53px]"
          >
            <svg viewBox="0 0 32 32" className="size-[32px]">
              <path
                d="M16 3v26M3 16h26"
                stroke="#737573"
                strokeWidth="6"
                strokeLinecap="round"
              />
            </svg>
          </button>
        </section>

        <RouteOptions />

        <div className="mt-[24px] mb-[20px] flex justify-center">
          <button
            type="button"
            className="flex h-[111px] items-center gap-[26px] rounded-full border-[3px] border-[#cbcbcb] pr-[34px] pl-[30px] text-[44px] leading-none font-semibold text-[#444444]"
          >
            <svg viewBox="771 464 177 178" className="size-[59px]" fill="#c2d750">
              <path d="M948 464L927 623 870 600 841 642V586L902 522 809 577 771 561z" />
            </svg>
            Stopps senden
          </button>
        </div>

        <section className="relative">
          <RouteMap />
          <MapButtons />
        </section>
      </main>

      <TripSummary />
    </div>
  );
}
